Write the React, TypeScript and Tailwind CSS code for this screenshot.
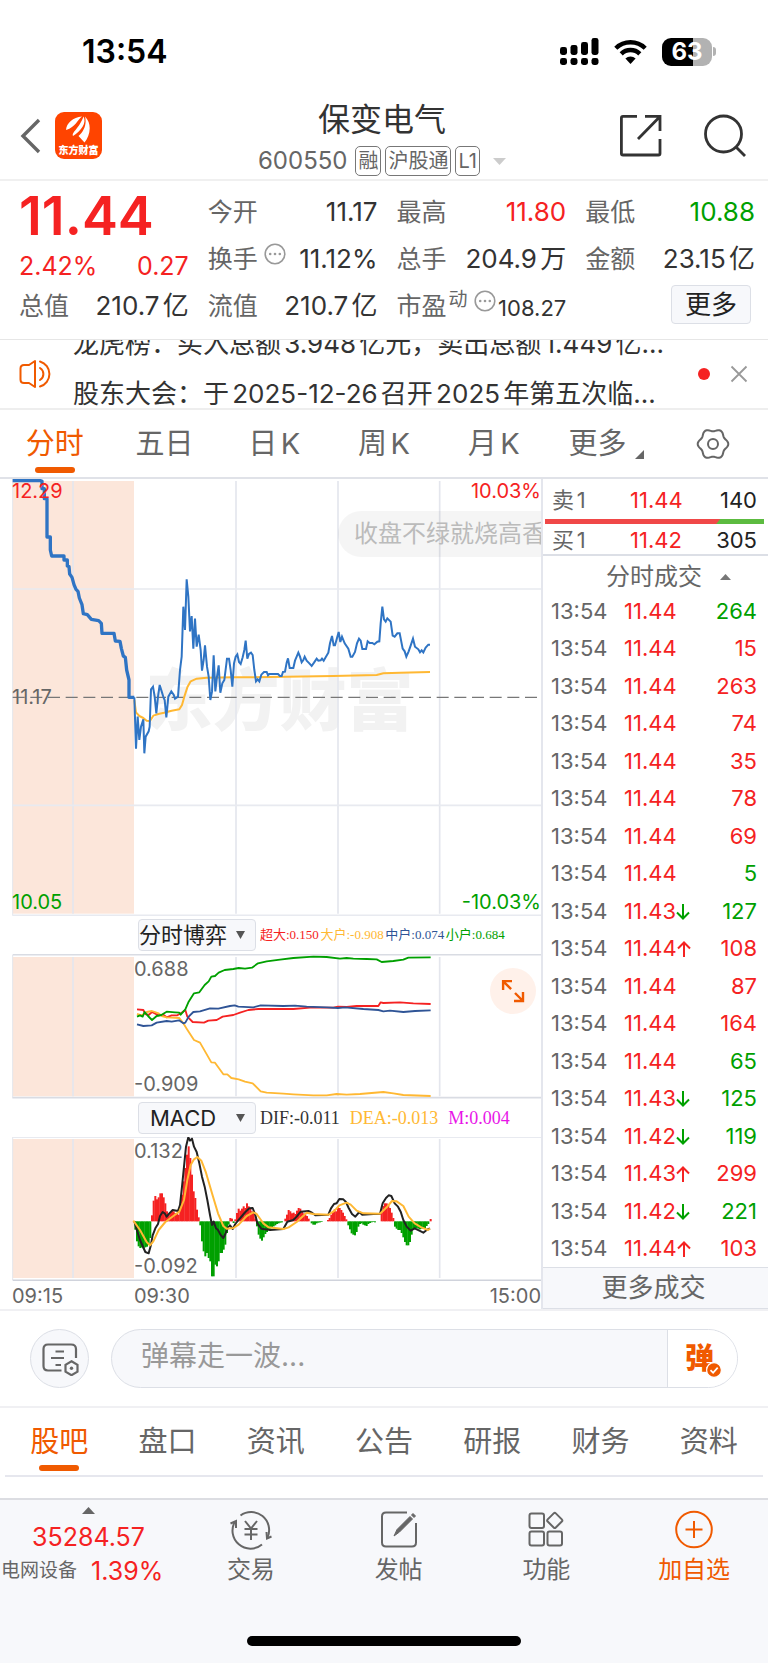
import type { ReactNode } from "react";

const RED = "#f52222";
const GREEN = "#00a000";
const BLUE = "#2f74c4";
const AMBER = "#ffb833";

type Trade = { price: string; dir?: "up" | "down"; qty: number; side: "buy" | "sell" };

const trades: Trade[] = [
  { price: "11.44", qty: 264, side: "sell" },
  { price: "11.44", qty: 15, side: "buy" },
  { price: "11.44", qty: 263, side: "buy" },
  { price: "11.44", qty: 74, side: "buy" },
  { price: "11.44", qty: 35, side: "buy" },
  { price: "11.44", qty: 78, side: "buy" },
  { price: "11.44", qty: 69, side: "buy" },
  { price: "11.44", qty: 5, side: "sell" },
  { price: "11.43", dir: "down", qty: 127, side: "sell" },
  { price: "11.44", dir: "up", qty: 108, side: "buy" },
  { price: "11.44", qty: 87, side: "buy" },
  { price: "11.44", qty: 164, side: "buy" },
  { price: "11.44", qty: 65, side: "sell" },
  { price: "11.43", dir: "down", qty: 125, side: "sell" },
  { price: "11.42", dir: "down", qty: 119, side: "sell" },
  { price: "11.43", dir: "up", qty: 299, side: "buy" },
  { price: "11.42", dir: "down", qty: 221, side: "sell" },
  { price: "11.44", dir: "up", qty: 103, side: "buy" },
];

const auctionLine =
  "38,32 122,32 126,34 126,56 133,56 133,86 141,86 141,201 151,201 151,240 155,258 192,258 192,270 202,270 202,288 207,290 209,312 216,322 222,344 228,358 234,364 238,384 246,404 250,431 262,434 274,448 296,452 304,460 306,490 342,490 346,513 360,514 364,535 370,558 376,562 380,600 387,630 387,682 403,682";
const priceLine =
  "403,682 408,836 413,740 418,810 423,770 430,748 433,850 437,800 446,784 449,770 453,658 459,650 464,680 469,730 474,680 479,645 485,664 491,684 494,690 499,742 505,680 514,664 521,674 525,686 534,680 537,640 540,600 545,560 550,410 555,480 560,328 565,380 570,484 575,438 580,536 585,446 590,530 596,494 602,540 606,602 611,570 615,526 621,590 626,620 631,690 636,665 641,556 646,664 651,620 656,586 661,668 667,640 673,630 681,566 687,566 692,600 697,650 702,580 707,560 712,553 717,576 722,582 728,562 733,540 737,512 742,566 747,552 753,548 758,555 763,600 768,634 773,628 778,634 784,614 792,606 800,606 804,616 808,612 834,612 840,618 845,618 849,606 855,605 860,578 864,565 869,594 880,594 885,572 890,560 895,548 900,560 905,577 910,570 914,560 920,572 928,580 935,588 942,578 950,566 955,572 962,571 966,566 971,572 977,562 985,548 990,520 996,498 1001,526 1005,526 1010,508 1016,486 1021,516 1026,500 1034,520 1045,536 1052,560 1057,560 1065,546 1071,520 1077,506 1082,512 1087,537 1098,537 1103,514 1109,519 1117,519 1123,523 1132,515 1138,514 1142,460 1147,410 1152,448 1157,455 1162,445 1172,455 1178,497 1184,500 1192,490 1199,490 1208,536 1214,544 1219,560 1226,544 1233,524 1239,506 1245,530 1255,538 1260,547 1265,541 1270,547 1277,533 1285,524 1290,524";
const averageLine =
  "403,690 408,727 418,738 430,744 440,752 450,753 460,737 475,732 492,728 515,722 538,718 546,705 553,680 562,652 572,634 590,626 620,623 700,622 810,621 1000,618 1130,615 1150,610 1200,608 1290,606";

const flowLines = [
  { color: RED, points: "411,298 430,300 436,312 446,315 456,306 476,316 490,314 500,322 515,316 532,316 545,308 556,300 562,320 578,336 612,338 625,332 650,330 668,320 700,315 720,308 745,300 775,297 880,297 930,293 1000,293 1014,290 1040,291 1070,288 1135,288 1142,277 1150,279 1200,277 1240,280 1292,282" },
  { color: AMBER, points: "411,312 425,316 440,306 456,303 476,310 485,318 500,322 538,324 550,340 560,356 582,390 600,398 634,457 645,458 670,493 682,493 694,504 716,508 735,515 758,520 782,544 800,548 850,551 880,553 940,556 980,556 1010,552 1040,554 1080,552 1150,546 1180,550 1210,555 1292,558" },
  { color: "#2f5496", points: "411,343 430,348 455,346 470,338 500,333 515,335 537,331 550,340 556,338 566,320 580,306 600,304 630,295 655,296 690,288 704,286 715,290 760,292 782,286 850,288 885,287 920,290 980,292 1014,294 1035,292 1090,297 1135,300 1150,304 1170,302 1210,306 1245,303 1292,301" },
  { color: GREEN, points: "411,320 420,316 428,320 434,306 444,318 456,330 470,318 484,315 500,305 525,307 538,308 542,314 556,298 566,275 582,250 598,247 614,225 626,214 634,200 645,198 656,188 674,180 700,177 716,174 735,176 756,173 774,160 800,154 840,149 880,144 940,140 980,141 1020,146 1040,144 1060,146 1100,147 1130,148 1145,156 1180,153 1210,149 1225,143 1292,142" },
];

// Histogram runs: starting x followed by the signed bar heights, one every five units.
const macdRuns: [number, number[]][] = [
  [403, [-25, -60, -75, -80, -78, -82, -78, -76, -70, -50]],
  [453, [18, 62, 76, 66, 72, 84, 84, 72, 54, 30, 20, 28, 32, 30, 25, 22, 20, 50, 80, 120, 160, 200, 225, 190, 140, 90, 70, 35, 12]],
  [598, [-12, -60, -90, -105, -95, -110, -120, -165, -165, -130, -135, -120, -95, -95, -85, -70, -35, -10]],
  [688, [10, 8, -5, 6, 25, 38, 32, 38, 45, 40, 54, 45, 38, 30, 25, 8]],
  [768, [-15, -40, -52, -58, -48, -38, -32, -25, -22, -20, -15, -12, -8, -6, -4, -3]],
  [853, [8, 20, 34, 30, 24, 26, 22, 32, 40, 38, 28, 24, 20, 16, 8]],
  [932, [-6, -10, -10, -6, -4, -3, -2]],
  [981, [4, 10, 20, 30, 36, 30, 42, 40, 34, 26, 16, 6]],
  [1042, [-12, -24, -36, -40, -42, -32, -16, -8, -6, -10, -12, -14, -8, -5, -3, -2, -3]],
  [1142, [30, 46, 54, 54, 50, 40, 26, 10]],
  [1182, [-16, -22, -26, -26, -35, -48, -62, -72, -72, -62, -40, -26, -22, -20, -22, -24, -22, -22, -20, -14, -8]],
  [1289, [7]],
];
const difLine =
  "403,934 412,965 420,990 428,1008 436,1026 446,1030 452,1008 458,976 466,955 474,942 480,918 488,906 494,910 500,920 508,910 518,900 534,903 540,885 546,830 552,770 558,710 565,682 570,692 576,686 582,710 590,726 598,760 606,800 614,830 622,870 630,915 636,945 641,935 648,955 654,960 662,975 670,984 676,972 684,952 690,946 698,957 706,942 714,932 726,918 736,906 748,895 758,894 766,915 772,940 784,956 810,960 850,957 862,935 880,930 890,920 902,905 925,903 936,908 946,916 985,914 993,895 1002,882 1010,880 1018,867 1030,868 1038,876 1046,894 1056,912 1066,920 1078,906 1086,914 1120,912 1140,912 1148,880 1158,864 1166,856 1174,858 1184,880 1194,890 1202,905 1210,930 1220,950 1232,962 1244,955 1258,962 1270,968 1280,960 1290,955";
const deaLine =
  "400,932 420,960 440,996 450,1006 460,994 476,960 496,936 520,918 538,905 552,870 562,810 572,765 582,748 592,741 604,752 618,788 636,850 654,910 670,948 680,956 700,954 716,944 740,918 760,907 770,912 790,940 806,952 850,957 866,952 890,936 920,908 940,912 986,914 1004,902 1018,886 1040,878 1052,884 1070,902 1090,910 1140,911 1160,892 1176,873 1190,874 1210,888 1226,920 1244,940 1264,952 1284,960 1290,956";

const gearPath =
  Array.from({ length: 72 }, (_, i) => {
    const t = (i / 72) * Math.PI * 2;
    const r = 14 + 1.3 * Math.cos(6 * t);
    return `${i === 0 ? "M" : "L"}${(17 + r * Math.cos(t)).toFixed(2)} ${(17 + r * Math.sin(t)).toFixed(2)}`;
  }).join("") + "Z";

function StatusBar() {
  return (
    <div className="flex h-[90px] items-center justify-between pt-[13px] pr-[52px] pl-[82px]">
      <span className="text-[32px] leading-[40px] font-semibold text-black">13:54</span>
      <div className="flex items-center gap-[15px]">
        <svg className="h-[27px] w-[39px]" viewBox="0 0 39 27" aria-hidden="true">
          {[
            [0, 9, 8],
            [10.5, 7, 10],
            [21, 4, 13],
            [31.5, 0, 17],
          ].map(([x, y, h]) => (
            <g key={x}>
              <rect x={x} y={y} width="7" height={h} rx="2.4" />
              <rect x={x} y="20" width="7" height="7" rx="2.4" />
            </g>
          ))}
        </svg>
        <svg className="h-[25px] w-[33px]" viewBox="0 0 33 25" fill="none" stroke="#000" strokeWidth="4.4" aria-hidden="true">
          <path d="M1.8 9.2a21 21 0 0 1 29.4 0" />
          <path d="M7.2 14.9a13.2 13.2 0 0 1 18.6 0" />
          <path d="M16.5 25 11.4 19.6a7.4 7.4 0 0 1 10.2 0z" fill="#000" stroke="none" />
        </svg>
        <div className="flex items-center gap-px">
          <span className="flex h-[28px] w-[50px] items-center justify-center rounded-[9px] bg-linear-to-r from-black from-63% to-[#b2b2b2] to-63% text-[24px] leading-[28px] font-bold text-white">
            63
          </span>
          <span className="h-[9px] w-[3px] rounded-r-full bg-[#b2b2b2]" />
        </div>
      </div>
    </div>
  );
}

function Tag({ children }: { children: ReactNode }) {
  return (
    <span className="flex h-[30px] items-center rounded-[5px] border border-[#777] px-[2px] text-[20px] leading-[28px] text-[#666]">
      {children}
    </span>
  );
}

function Header() {
  return (
    <header className="flex h-[91px] items-start justify-between border-b-2 border-[#f0f0f0] pr-[22px] pl-[20px]">
      <div className="flex w-[125px] items-center gap-[14px] pt-[22px]">
        <button aria-label="返回">
          <svg className="h-[36px] w-[21px]" viewBox="0 0 21 36" fill="none" stroke="#666" strokeWidth="3.4" aria-hidden="true">
            <path d="M19 2 3 18l16 16" />
          </svg>
        </button>
        <div className="flex h-[47px] w-[47px] flex-col items-center justify-between rounded-[9px] bg-[#ff4400] pt-[4px] pb-[3px]">
          <svg className="h-[27px] w-[27px]" viewBox="0 0 27 27" fill="#fff" aria-hidden="true">
            <path d="M1 14C1.5 7 8 1.5 17 .5 12 4 11 11 1 14z" />
            <path d="M8 20C6.5 16 14 13 18.5.5 22 7 16 15 8 20z" />
            <path d="M20 .5C22 8 19 15 13.5 20L19.5 26.5C25 20 27.5 8 20 .5z" />
          </svg>
          <span className="text-[10px] leading-[12px] font-black whitespace-nowrap text-white">东方财富</span>
        </div>
      </div>
      <div className="flex flex-col items-center pt-[10px]">
        <h1 className="text-[32px] leading-[40px] text-[#333]">保变电气</h1>
        <div className="flex items-center gap-[4px] pt-[6px]">
          <span className="pr-[4px] text-[24px] leading-[30px] text-[#666]">600550</span>
          <Tag>融</Tag>
          <Tag>沪股通</Tag>
          <Tag>L1</Tag>
          <svg className="ml-[9px] h-[7px] w-[13px]" viewBox="0 0 13 7" fill="#ccc" aria-hidden="true">
            <path d="M0 0h13L6.5 7z" />
          </svg>
        </div>
      </div>
      <div className="flex w-[127px] items-start justify-between pt-[24px]">
        <button aria-label="分享">
          <svg className="h-[43px] w-[43px]" viewBox="0 0 43 43" fill="none" stroke="#333" strokeWidth="2.8" aria-hidden="true">
            <path d="M18 2.4H4Q2.4 2.4 2.4 4V39.500Q2.4 41 4 41H39.500Q41 41 41 39.500V25" />
            <path d="M26 2.4H41V17M41 2.4 19 25" />
          </svg>
        </button>
        <button aria-label="搜索">
          <svg className="h-[43px] w-[43px]" viewBox="0 0 43 43" fill="none" stroke="#333" strokeWidth="2.8" aria-hidden="true">
            <circle cx="20.5" cy="20" r="18" />
            <path d="m33 33 9 9" />
          </svg>
        </button>
      </div>
    </header>
  );
}

function InfoDots() {
  return (
    <svg className="h-[22px] w-[22px] shrink-0" viewBox="0 0 22 22" fill="none" aria-hidden="true">
      <circle cx="11" cy="11" r="9.8" stroke="#999" strokeWidth="1.6" />
      <g fill="#999">
        <circle cx="6.2" cy="11" r="1.3" />
        <circle cx="11" cy="11" r="1.3" />
        <circle cx="15.8" cy="11" r="1.3" />
      </g>
    </svg>
  );
}

function Quote({ label, value, className = "text-[#333]", info = false }: { label: string; value: string; className?: string; info?: boolean }) {
  return (
    <div className="flex items-center justify-between whitespace-nowrap">
      <span className="flex items-start gap-[6px] text-[25px] leading-[32px] text-[#666]">
        {label}
        {info && <InfoDots />}
      </span>
      <span className={`text-[26px] leading-[32px] ${className}`}>{value}</span>
    </div>
  );
}

function Quotes() {
  return (
    <section className="grid grid-cols-4 grid-rows-[47px_47px_47px] gap-x-[19px] border-b border-[#e6e6e6] pt-[7px] pr-[13px] pb-[10px] pl-[19px]">
      <div className="row-span-2 flex flex-col justify-between">
        <span className="text-[54px] leading-[56px] font-semibold text-[#f52222]">11.44</span>
        <div className="flex justify-between text-[25px] leading-[32px] text-[#f52222]">
          <span>2.42%</span>
          <span>0.27</span>
        </div>
      </div>
      <Quote label="今开" value="11.17" />
      <Quote label="最高" value="11.80" className="text-[#f52222]" />
      <Quote label="最低" value="10.88" className="text-[#00a000]" />
      <Quote label="换手" value="11.12%" info />
      <Quote label="总手" value="204.9万" />
      <Quote label="金额" value="23.15亿" />
      <Quote label="总值" value="210.7亿" />
      <Quote label="流值" value="210.7亿" />
      <div className="flex items-center justify-between whitespace-nowrap">
        <span className="flex items-start text-[25px] leading-[32px] text-[#666]">
          市盈<span className="pr-[6px] pl-[2px] text-[19px] leading-[20px]">动</span>
          <InfoDots />
        </span>
        <span className="pt-[4px] text-[22px] leading-[28px] text-[#333]">108.27</span>
      </div>
      <div className="flex items-center justify-end pr-[4px] pb-[2px]">
        <button className="h-[39px] w-[80px] rounded-[4px] border border-[#dcdfe6] bg-[#f7f8fb] text-[26px] leading-[36px] text-[#222]">更多</button>
      </div>
    </section>
  );
}

function News() {
  return (
    <section className="flex h-[70px] items-center overflow-hidden border-b-2 border-[#eee] pr-[20px] pl-[19px]">
      <svg className="h-[30px] w-[35px] shrink-0" viewBox="0 0 35 30" fill="none" stroke="#f05a00" strokeWidth="2" strokeLinecap="round" strokeLinejoin="round" aria-hidden="true">
        <path d="M16 2v26l-6-4H5q-3.500 0-3.500-3.500v-11Q1.500 6 5 6h5z" />
        <path d="M21 9a7 7 0 0 1 0 12M21 2.500a13 13 0 0 1 0 25" />
      </svg>
      <ul className="mt-[4px] ml-[19px] flex h-[114px] min-w-0 flex-1 flex-col text-[26px] leading-[50px] whitespace-nowrap text-[#333]">
        <li>龙虎榜：买入总额3.948亿元，卖出总额1.449亿...</li>
        <li>股东大会：于2025-12-26召开2025年第五次临...</li>
      </ul>
      <span className="h-[12px] w-[12px] shrink-0 rounded-full bg-[#f52222]" />
      <button className="ml-[20px]" aria-label="关闭">
        <svg className="h-[18px] w-[18px]" viewBox="0 0 18 18" stroke="#999" strokeWidth="1.8" aria-hidden="true">
          <path d="m1.5 1.5 15 15m0-15-15 15" />
        </svg>
      </button>
    </section>
  );
}

function TabButton({ active = false, children }: { active?: boolean; children: ReactNode }) {
  return (
    <button className={`relative flex h-[67px] items-center justify-center text-[29px] leading-[40px] whitespace-nowrap ${active ? "text-[#f05a00]" : "text-[#666]"}`}>
      {children}
      {active && <span className="absolute bottom-[4px] left-1/2 h-[6px] w-[40px] -translate-x-1/2 rounded-[3px] bg-[#f05a00]" />}
    </button>
  );
}

function PeriodTabs() {
  return (
    <nav className="grid grid-cols-7 border-b-2 border-[#e0e2e8]">
      <TabButton active>分时</TabButton>
      <TabButton>五日</TabButton>
      <TabButton>日K</TabButton>
      <TabButton>周K</TabButton>
      <TabButton>月K</TabButton>
      <TabButton>
        <span className="pl-[6px]">更多</span>
        <svg className="mt-[22px] ml-[9px] h-[9px] w-[9px]" viewBox="0 0 9 9" fill="#666" aria-hidden="true">
          <path d="M9 0v9H0z" />
        </svg>
      </TabButton>
      <button className="flex items-center justify-center" aria-label="设置">
        <svg className="h-[34px] w-[34px]" viewBox="0 0 34 34" fill="none" stroke="#666" strokeWidth="2" aria-hidden="true">
          <path d={gearPath} />
          <circle cx="17" cy="17" r="5" />
        </svg>
      </button>
    </nav>
  );
}

function ChartGrid({ top, bottom }: { top: number; bottom: number }) {
  return (
    <>
      <rect x="38" y={top} width="364" height={bottom - top} fill="#fce6da" />
      <g stroke="#e4e6ed" strokeWidth="5">
        <path d={`M219 ${top}V${bottom}M708 ${top}V${bottom}M1014 ${top}V${bottom}M1319 ${top}V${bottom}`} />
        <path d={`M38 ${top - 6}V${bottom + 6}`} strokeWidth="3" />
      </g>
    </>
  );
}

function IndicatorSelect({ label, options }: { label: string; options: string[] }) {
  return (
    <div className="relative">
      <select
        aria-label={label}
        className="block h-[32px] w-[118px] appearance-none rounded-[4px] border border-[#dcdfe6] bg-[#f7f8fb] pr-[28px] text-center text-[22px] leading-[28px] text-[#222]"
      >
        {options.map((o) => (
          <option key={o}>{o}</option>
        ))}
      </select>
      <svg className="pointer-events-none absolute top-[12px] right-[11px] h-[8px] w-[9px]" viewBox="0 0 9 8" fill="#555" aria-hidden="true">
        <path d="M0 0h9L4.5 8z" />
      </svg>
    </div>
  );
}

function Charts() {
  return (
    <div className="min-w-0 flex-1 text-[20px] leading-[24px] text-[#666]">
      <div className="relative h-[437px] overflow-hidden">
        <div className="absolute top-[177px] right-[12px] left-[30px] text-center text-[67px] leading-[90px] font-black text-[#f2f2f2]">东方财富</div>
        <svg className="absolute inset-0 h-full w-full" viewBox="0 27 1623 1311" preserveAspectRatio="none" fill="none" aria-hidden="true">
          <ChartGrid top={33} bottom={1331} />
          <path d="M38 357H1623M38 1006H1623M38 1336H1623" stroke="#e8eaf0" strokeWidth="5" />
          <path d="M38 682H1623" stroke="#777" strokeWidth="4" strokeDasharray="36 17" />
          <polyline points={averageLine} stroke={AMBER} strokeWidth="6" strokeLinejoin="round" />
          <polyline points={auctionLine} stroke={BLUE} strokeWidth="10" strokeLinejoin="round" />
          <polyline points={priceLine} stroke={BLUE} strokeWidth="6" />
        </svg>
        <span className="absolute top-0 left-[12px] text-[#f52222]">12.29</span>
        <span className="absolute top-0 right-0 text-[#f52222]">10.03%</span>
        <span className="absolute top-[206px] left-[12px]">11.17</span>
        <span className="absolute bottom-[2px] left-[12px] text-[#00a000]">10.05</span>
        <span className="absolute right-0 bottom-[2px] text-[#00a000]">-10.03%</span>
        <div className="absolute top-[32px] right-0 w-[203px] overflow-hidden rounded-l-full bg-black/4 pl-[16px] text-[24px] leading-[46px] whitespace-nowrap text-[#bbb]">
          收盘不绿就烧高香
        </div>
      </div>

      <div className="flex h-[38px] items-center gap-[4px] pl-[138px]">
        <IndicatorSelect label="副图指标一" options={["分时博弈"]} />
        <p className="font-['Liberation_Serif','Noto_Sans_CJK_SC',serif] text-[13px] leading-[20px] whitespace-nowrap">
          <span className="text-[#f52222]">超大:0.150</span>
          <span className="text-[#ffb833]">大户:-0.908</span>
          <span className="text-[#2f5496]">中户:0.074</span>
          <span className="text-[#00a000]">小户:0.684</span>
        </p>
      </div>

      <div className="relative h-[145px]">
        <svg className="absolute inset-0 h-full w-full" viewBox="0 132 1623 435" preserveAspectRatio="none" fill="none" aria-hidden="true">
          <ChartGrid top={141} bottom={559} />
          <path d="M38 134H1623M38 563H1623" stroke="#d9dce3" strokeWidth="5" />
          {flowLines.map((l) => (
            <polyline key={l.color} points={l.points} stroke={l.color} strokeWidth="5.5" strokeLinejoin="round" />
          ))}
        </svg>
        <span className="absolute top-[3px] left-[134px]">0.688</span>
        <span className="absolute bottom-[3px] left-[134px]">-0.909</span>
        <button className="absolute top-[14px] right-[5px] flex h-[46px] w-[46px] items-center justify-center rounded-full bg-[#fff1ea]" aria-label="放大">
          <svg className="h-[24px] w-[24px]" viewBox="0 0 24 24" fill="none" stroke="#f05a00" strokeWidth="2.4" aria-hidden="true">
            <path d="M2.1 11V2.1H11M2.1 2.1l8 8M22 13v9h-9M22 22l-8-8" />
          </svg>
        </button>
      </div>

      <div className="flex h-[38px] items-center gap-[4px] pl-[138px]">
        <IndicatorSelect label="副图指标二" options={["MACD"]} />
        <p className="flex gap-[10px] font-['Liberation_Serif','Noto_Sans_CJK_SC',serif] text-[18px] leading-[24px] whitespace-nowrap">
          <span className="text-[#333]">DIF:-0.011</span>
          <span className="text-[#ffb833]">DEA:-0.013</span>
          <span className="text-[#e815e8]">M:0.004</span>
        </p>
      </div>

      <div className="relative h-[144px]">
        <svg className="absolute inset-0 h-full w-full" viewBox="0 681 1623 432" preserveAspectRatio="none" fill="none" aria-hidden="true">
          <ChartGrid top={687} bottom={1104} />
          <path d="M38 682H1623" stroke="#e8eaf0" strokeWidth="4" />
          <path d="M38 1111H1623" stroke="#d0d3dc" strokeWidth="5" />
          {macdRuns.map(([start, values]) =>
            values.map((v, i) => (
              <rect
                key={`${start}-${i}`}
                x={start + i * 5}
                y={v > 0 ? 934 - v : 934}
                width="6"
                height={Math.abs(v)}
                fill={v > 0 ? RED : GREEN}
              />
            )),
          )}
          <polyline points={difLine} stroke="#222" strokeWidth="6" strokeLinejoin="round" />
          <polyline points={deaLine} stroke={AMBER} strokeWidth="6" strokeLinejoin="round" />
        </svg>
        <span className="absolute top-[2px] left-[134px]">0.132</span>
        <span className="absolute bottom-[3px] left-[134px]">-0.092</span>
      </div>

      <div className="relative flex h-[28px] items-center justify-between pt-[2px] pl-[12px]">
        <span>09:15</span>
        <span className="absolute left-[134px]">09:30</span>
        <span>15:00</span>
      </div>
    </div>
  );
}

function Arrow({ dir }: { dir: "up" | "down" }) {
  return (
    <svg className="inline-block h-[16px] w-[14px] align-[-1px]" viewBox="0 0 14 16" fill="none" stroke="currentColor" strokeWidth="2" aria-hidden="true">
      <path d={dir === "up" ? "M7 16V1.500M1 7.500 7 1.500l6 6" : "M7 0v14.500M1 8.500l6 6 6-6"} />
    </svg>
  );
}

function BookRow({ label, price, qty }: { label: string; price: string; qty: string }) {
  return (
    <div className="flex h-[28px] items-center pr-[11px] pl-[9px] text-[22px] leading-[28px]">
      <span className="w-[78px] text-[#666]">{label}</span>
      <span className="flex-1 text-[#f52222]">{price}</span>
      <span className="text-[#222]">{qty}</span>
    </div>
  );
}

function OrderPanel() {
  return (
    <aside className="flex w-[227px] shrink-0 flex-col border-l-2 border-[#e4e6ed]">
      <div className="border-b-2 border-[#dcdfe6] pt-[7px]">
        <BookRow label="卖1" price="11.44" qty="140" />
        <div className="mr-[4px] ml-[2px] mt-[5px] mb-[2px] flex h-[5px] bg-[#5cbb40]">
          <span className="w-4/5 bg-[#f04848] [clip-path:polygon(0_0,100%_0,calc(100%-4px)_100%,0_100%)]" />
        </div>
        <BookRow label="买1" price="11.42" qty="305" />
      </div>
      <button className="flex h-[36px] items-center justify-center gap-[18px] pt-[6px] pl-[26px] text-[24px] leading-[30px] text-[#666]">
        分时成交
        <svg className="h-[6px] w-[11px]" viewBox="0 0 11 6" fill="#777" aria-hidden="true">
          <path d="M0 6 5.5 0 11 6z" />
        </svg>
      </button>
      <table className="h-[675px] w-full table-fixed text-[22px] leading-[28px]">
        <tbody>
          {trades.map((t, i) => (
            <tr key={i}>
              <td className="w-[81px] py-0 pl-[8px] text-[#666]">13:54</td>
              <td className="w-[74px] p-0 whitespace-nowrap text-[#f52222]">
                {t.price}
                {t.dir && (
                  <span className={t.dir === "up" ? "text-[#f52222]" : "text-[#00a000]"}>
                    <Arrow dir={t.dir} />
                  </span>
                )}
              </td>
              <td className={`py-0 pr-[11px] text-right ${t.side === "buy" ? "text-[#f52222]" : "text-[#00a000]"}`}>{t.qty}</td>
            </tr>
          ))}
        </tbody>
      </table>
      <button className="flex-1 border-t border-b border-[#dcdfe6] bg-[#f7f8fb] pr-[4px] text-[26px] leading-[38px] text-[#666]">更多成交</button>
    </aside>
  );
}

function DanmuBar() {
  return (
    <section className="flex items-center gap-[22px] border-t-2 border-b-2 border-[#f0f0f3] py-[18px] pr-[30px] pl-[30px]">
      <button className="flex h-[59px] w-[59px] shrink-0 items-center justify-center rounded-full border border-[#dcdfe6] bg-[#f7f8fb]" aria-label="弹幕设置">
        <svg className="mt-[1px] ml-[2px] h-[33px] w-[37px]" viewBox="0 0 37 33" fill="none" stroke="#666" strokeWidth="2.2" aria-hidden="true">
          <path d="M19.500 27.500H6Q1.500 27.500 1.500 23V6Q1.500 1.500 6 1.500H29Q34 1.500 34 6V15" />
          <path d="M13.500 8.500H22M9 15H22M13.500 22H19" />
          <path d="M29.500 18.300 35.500 21.800V28.700L29.500 32.200 23.500 28.700V21.800Z" />
          <circle cx="29.5" cy="25.2" r="1.7" fill="#666" stroke="none" />
        </svg>
      </button>
      <div className="flex h-[59px] min-w-0 flex-1 overflow-hidden rounded-full border border-[#dcdfe6] bg-[#f7f8fb]">
        <input
          aria-label="弹幕"
          placeholder="弹幕走一波..."
          className="min-w-0 flex-1 bg-transparent pb-[5px] pl-[29px] text-[28px] text-[#333] outline-none placeholder:text-[#999]"
        />
        <button className="relative w-[70px] shrink-0 border-l border-[#dcdfe6] bg-white pr-[6px] text-[29px] leading-[40px] font-black text-[#f05a00]">
          弹
          <svg className="absolute top-[32px] left-[38px] h-[16px] w-[16px]" viewBox="0 0 16 16" fill="none" aria-hidden="true">
            <circle cx="8" cy="8" r="7.4" fill="#f05a00" stroke="#fff" strokeWidth="1.2" />
            <path d="m4.500 8.200 2.600 2.600 4.600-5.200" stroke="#fff" strokeWidth="1.7" />
          </svg>
        </button>
      </div>
    </section>
  );
}

function InfoTabs() {
  return (
    <nav className="mx-[5px] mb-[21px] grid grid-cols-7 border-b-2 border-[#e6e7ee]">
      <TabButton active>股吧</TabButton>
      <TabButton>盘口</TabButton>
      <TabButton>资讯</TabButton>
      <TabButton>公告</TabButton>
      <TabButton>研报</TabButton>
      <TabButton>财务</TabButton>
      <TabButton>资料</TabButton>
    </nav>
  );
}

function BottomItem({ label, accent = false, children }: { label: string; accent?: boolean; children: ReactNode }) {
  return (
    <button className={`flex flex-1 flex-col items-center gap-[4px] pt-[10px] text-[24px] leading-[32px] ${accent ? "text-[#f05a00]" : "text-[#666]"}`}>
      <svg className="h-[40px] w-[44px]" viewBox="0 0 44 40" fill="none" stroke="currentColor" strokeWidth="2" aria-hidden="true">
        {children}
      </svg>
      {label}
    </button>
  );
}

function BottomBar() {
  return (
    <footer className="border-t-2 border-[#dcdde2] bg-[#f7f8fb]">
      <div className="flex h-[136px]">
        <a href="#index" className="flex w-[177px] shrink-0 flex-col pt-[7px] text-[25px] whitespace-nowrap text-[#f52222]">
          <svg className="ml-[82px] h-[7px] w-[13px]" viewBox="0 0 13 7" fill="#666" aria-hidden="true">
            <path d="M0 7 6.5 0 13 7z" />
          </svg>
          <span className="mt-[6px] text-center leading-[34px]">35284.57</span>
          <span className="flex items-center gap-[14px] pl-[1px] leading-[34px]">
            <span className="text-[19px] text-[#666]">电网设备</span>
            1.39%
          </span>
        </a>
        <BottomItem label="交易">
          <path d="M11.500 5.500A18 18 0 0 1 38.500 27.500M33 34.500A18 18 0 0 1 6 11.500" />
          <path d="M1.500 13.500 7 11v7M42.500 26.500 38 28.500 37.500 22" />
          <path d="m16 11 6 7.500 6-7.500M22 18.500V30M15.500 19h13M15.500 24.500h13" />
        </BottomItem>
        <BottomItem label="发帖">
          <path d="M30 2.500H9Q5 2.500 5 6.500V32.500Q5 36.500 9 36.500H35Q39 36.500 39 32.500V13" />
          <path d="M17 26 20 19.500 33 6.500 35.500 9 22.500 22ZM34.500 5 36 3.500 38.500 6 37 7.500Z" fill="currentColor" strokeWidth="1" />
        </BottomItem>
        <BottomItem label="功能">
          <rect x="5.5" y="3.5" width="14.5" height="14.5" rx="2" />
          <rect x="5.5" y="21.5" width="14.5" height="14" rx="2" />
          <rect x="23.5" y="21.5" width="14.5" height="14" rx="2" />
          <rect x="25" y="4.7" width="11.5" height="11.5" rx="1.5" transform="rotate(45 30.75 10.45)" />
        </BottomItem>
        <BottomItem label="加自选" accent>
          <circle cx="22" cy="19.5" r="17.8" />
          <path d="M13.500 19.500h17M22 11v17" />
        </BottomItem>
      </div>
      <div className="flex justify-center pb-[17px]">
        <span className="h-[10px] w-[274px] rounded-full bg-black" />
      </div>
    </footer>
  );
}

export default function App() {
  return (
    <div className="min-h-screen bg-white font-['Inter','Noto_Sans_CJK_SC',sans-serif] [text-autospace:normal]">
      <StatusBar />
      <Header />
      <Quotes />
      <News />
      <PeriodTabs />
      <main className="flex">
        <Charts />
        <OrderPanel />
      </main>
      <DanmuBar />
      <InfoTabs />
      <BottomBar />
    </div>
  );
}
